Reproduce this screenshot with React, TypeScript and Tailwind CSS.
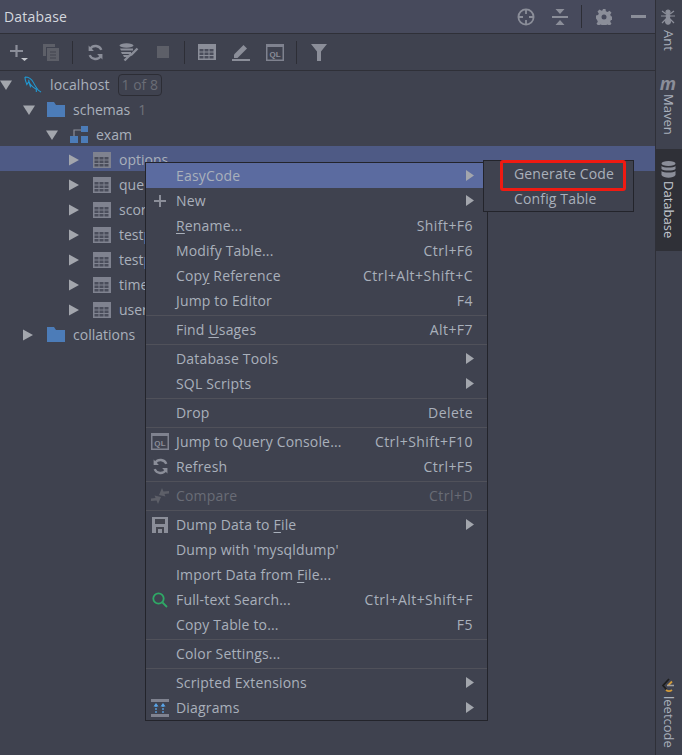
import React from "react";

const G = "#8b8e99";

function Tri({ open }: { open: boolean }) {
  return (
    <svg width="12" height="12" viewBox="0 0 12 12" className="shrink-0">
      {open ? <path d="M0 1.500h12L6 11z" fill="#a3a6ad" /> : <path d="M0 .5l10 5.500L0 11.500z" fill="#a3a6ad" />}
    </svg>
  );
}

function TableIcon({ c = "#7f828f", w = 18, h = 16 }: { c?: string; w?: number; h?: number }) {
  return (
    <svg width={w} height={h} viewBox="0 0 18 16" className="shrink-0">
      <rect width="18" height="16" fill={c} />
      {[5, 8.5, 12].map((y) => [1.5, 6.5, 11.5].map((x) => <rect key={`${x}-${y}`} x={x} y={y} width="4" height="2.5" fill="#4a4d5b" />))}
    </svg>
  );
}

function Folder() {
  return (
    <svg width="18" height="15" viewBox="0 0 18 15" className="shrink-0">
      <path d="M0 0h7l2 3h9v12H0z" fill="#4c7cb8" />
    </svg>
  );
}

function QL() {
  return (
    <svg width="18" height="17" viewBox="0 0 18 17" className="shrink-0">
      <rect x="0.75" y="0.75" width="16.5" height="15.5" fill="none" stroke="#7f828f" strokeWidth="1.5" />
      <rect x="0" y="0" width="18" height="3" fill="#7f828f" />
      <text x="9" y="13" textAnchor="middle" fontSize="8" fontWeight="700" fontFamily="'Liberation Sans',sans-serif" fill="#8b8e99">QL</text>
    </svg>
  );
}

function Refresh({ c = G }: { c?: string }) {
  return (
    <svg width="17" height="17" viewBox="0 0 16 16" className="shrink-0" fill="none" stroke={c} strokeWidth="2.2">
      <path d="M13.500 5.500A6 6 0 0 0 3 4.500M2.500 10.500A6 6 0 0 0 13 11.500" />
      <path d="M1.500 1.500l0 5 5 0z" fill={c} stroke="none" />
      <path d="M14.500 14.500l0-5-5 0z" fill={c} stroke="none" />
    </svg>
  );
}

function Sep() {
  return <div className="w-px h-[23px] bg-[#2d2e36] ml-[4px] mr-[5px] shrink-0" />;
}

function Slot({ children }: { children: React.ReactNode }) {
  return <div className="w-[34px] h-[22px] flex items-center justify-center shrink-0">{children}</div>;
}

function Toolbar() {
  return (
    <div className="h-[37px] flex items-center border-b border-[#2f3038]">
      <Slot>
        <svg width="18" height="18" viewBox="0 0 18 18" className="ml-[3px]">
          <path d="M6.500 2v12M0 8h13" stroke={G} strokeWidth="2.2" fill="none" />
          <path d="M11 15h7l-3.500 3z" fill="#c4c6cc" />
        </svg>
      </Slot>
      <Slot>
        <svg width="17" height="17" viewBox="0 0 17 17">
          <path d="M0 0h12v3H3v9H0z" fill="#5d5f68" />
          <rect x="4" y="4" width="12" height="13" fill="#5d5f68" />
          <path d="M7 8h6M7 11h6M7 14h6" stroke="#43454f" strokeWidth="1" />
        </svg>
      </Slot>
      <Sep />
      <Slot><Refresh /></Slot>
      <Slot>
        <svg width="20" height="19" viewBox="0 0 20 19">
          <ellipse cx="7.500" cy="2.500" rx="7" ry="2.200" fill={G} />
          <path d="M1 5.500h13v2H2zM2 9h10v2H3zM4 12h6v2H5z" fill={G} />
          <path d="M18.500 5.500l-6 6-2 1-5 5" stroke={G} strokeWidth="2.400" fill="none" />
        </svg>
      </Slot>
      <Slot>
        <div className="w-[12px] h-[12px] bg-[#5d5f68]" />
      </Slot>
      <Sep />
      <Slot><TableIcon c={G} /></Slot>
      <Slot>
        <svg width="18" height="18" viewBox="0 0 18 18">
          <path d="M2 11.500L11.500 2l3.500 3.500L5.500 15H2z" fill={G} />
          <rect x="0" y="16" width="18" height="2" fill={G} />
        </svg>
      </Slot>
      <Slot><QL /></Slot>
      <Sep />
      <Slot>
        <svg width="16" height="17" viewBox="0 0 16 17">
          <path d="M0 0h16L10 7.500V17H6V7.500z" fill={G} />
        </svg>
      </Slot>
    </div>
  );
}

function Row({ indent, open, icon, children, selected }: { indent: number; open: boolean; icon: React.ReactNode; children: React.ReactNode; selected?: boolean }) {
  return (
    <div className={`h-[25px] pt-[2px] flex items-center text-[#a9b0bb] ${selected ? "bg-[#4e5a85]" : ""}`}>
      <div className="shrink-0" style={{ marginLeft: indent }} />
      <Tri open={open} />
      <div className="w-[12px] shrink-0" />
      <div className="w-[18px] flex justify-center shrink-0">{icon}</div>
      <div className="w-[8px] shrink-0" />
      {children}
    </div>
  );
}

type Item = {
  label?: React.ReactNode;
  key?: string;
  sub?: boolean;
  sep?: boolean;
  icon?: React.ReactNode;
  active?: boolean;
  dim?: boolean;
};

const U = ({ children }: { children: React.ReactNode }) => <span className="underline underline-offset-2">{children}</span>;

const items: Item[] = [
  { label: "EasyCode", sub: true, active: true },
  { label: "New", sub: true, icon: <svg width="14" height="14" viewBox="0 0 14 14"><path d="M7 1v12M1 7h12" stroke={G} strokeWidth="2" /></svg> },
  { label: <><U>R</U>ename...</>, key: "Shift+F6" },
  { label: "Modify Table...", key: "Ctrl+F6" },
  { label: <>Cop<U>y</U> Reference</>, key: "Ctrl+Alt+Shift+C" },
  { label: "Jump to Editor", key: "F4" },
  { sep: true },
  { label: <>Find <U>U</U>sages</>, key: "Alt+F7" },
  { sep: true },
  { label: "Database Tools", sub: true },
  { label: "SQL Scripts", sub: true },
  { sep: true },
  { label: "Drop", key: "Delete" },
  { sep: true },
  { label: "Jump to Query Console...", key: "Ctrl+Shift+F10", icon: <QL /> },
  { label: "Refresh", key: "Ctrl+F5", icon: <Refresh /> },
  { sep: true },
  {
    label: "Compare",
    key: "Ctrl+D",
    dim: true,
    icon: (
      <svg width="18" height="16" viewBox="0 0 18 16" fill="#5d5f68">
        <path d="M8 7l3-7 1.500 3.500L18 3v2.500l-4.500.5 1 2.500z" />
        <path d="M10 9l-3 7-1.500-3.500L0 13v-2.500l4.500-.5-1-2.500z" />
      </svg>
    ),
  },
  { sep: true },
  { label: <>Dump Data to <U>F</U>ile</>, sub: true, icon: <svg width="16" height="16" viewBox="0 0 16 16"><path d="M0 0h16v16H0z" fill={G} /><rect x="3" y="2" width="10" height="5" fill="#43454f" /><rect x="4" y="10" width="8" height="6" fill="#43454f" /><rect x="6" y="12" width="4" height="4" fill={G} /></svg> },
  { label: "Dump with 'mysqldump'" },
  { label: <>Import Data from <U>F</U>ile...</> },
  { label: "Full-text Search...", key: "Ctrl+Alt+Shift+F", icon: <svg width="16" height="16" viewBox="0 0 16 16" fill="none" stroke="#2fa866" strokeWidth="1.800"><circle cx="6.500" cy="6.500" r="5.200" /><path d="M10.500 10.500l4.500 4.500" /></svg> },
  { label: "Copy Table to...", key: "F5" },
  { sep: true },
  { label: "Color Settings..." },
  { sep: true },
  { label: "Scripted Extensions", sub: true },
  { label: "Diagrams", sub: true, icon: <svg width="18" height="18" viewBox="0 0 18 18"><rect width="18" height="3" fill="#7f828f" /><rect y="15" width="18" height="3" fill="#7f828f" /><path d="M5 14V6M12 14V6" stroke="#5aa5e8" strokeWidth="1.300" strokeDasharray="2 1" /><path d="M2.500 7.500L5 4l2.500 3.500zM9.500 7.500L12 4l2.500 3.500z" fill="#5aa5e8" /></svg> },
];

function Menu() {
  return (
    <div className="absolute left-[145px] top-[162px] w-[343px] bg-[#3f424f] border border-[#23242b] text-[#a9b0bb] z-10 tracking-[0.17px]">
      {items.map((it, i) =>
        it.sep ? (
          <div key={i} className="h-[4px] flex items-center">
            <div className="w-full h-px bg-[#50515a]" />
          </div>
        ) : (
          <div key={i} className={`h-[25px] flex items-center ${it.active ? "bg-[#5b6ba0]" : ""} ${it.dim ? "text-[#696c76]" : ""}`}>
            <div className="w-[30px] pr-[2px] flex justify-center shrink-0">{it.icon}</div>
            <span className="flex-1 whitespace-nowrap">{it.label}</span>
            {it.key && <span className="pr-[14px] whitespace-nowrap tracking-[0.45px]">{it.key}</span>}
            {it.sub && (
              <svg width="8" height="11" viewBox="0 0 8 11" className="mr-[13px]">
                <path d="M0 0l8 5.500-8 5.500z" fill="#a3a6ad" />
              </svg>
            )}
          </div>
        )
      )}
    </div>
  );
}

function SubMenu() {
  return (
    <div className="absolute left-[483px] top-[160px] w-[151px] h-[52px] bg-[#3f424f] border border-[#23242b] text-[#a9b0bb] z-20 pl-[30px] tracking-[0.15px]">
      <div className="h-[25px] flex items-center whitespace-nowrap">Generate Code</div>
      <div className="h-[25px] flex items-center whitespace-nowrap">Config Table</div>
      <div className="absolute left-[16px] -top-[1px] w-[126px] h-[31px] border-[3px] border-[#f01a12] rounded-[3px]" />
    </div>
  );
}

function Vert({ children, className = "" }: { children: React.ReactNode; className?: string }) {
  return <span className={`[writing-mode:vertical-rl] ${className}`}>{children}</span>;
}

function Strip() {
  return (
    <div className="w-[27px] shrink-0 h-full bg-[#3f424f] border-l border-[#2f3038] flex flex-col items-center text-[#a9b0bb] text-[13px] pr-[2px]">
      <div className="h-[75px] flex flex-col items-center pt-[9px]">
        <svg width="14" height="16" viewBox="0 0 14 16" stroke={G} strokeWidth="1.200" fill={G}>
          <ellipse cx="7" cy="3" rx="2" ry="2" /><ellipse cx="7" cy="7" rx="1.800" ry="2" /><ellipse cx="7" cy="12" rx="2.400" ry="3.200" />
          <path d="M5 5L1 2M9 5l4-3M5 7H0M9 7h5M5 10l-4 4M9 10l4 4" fill="none" />
        </svg>
        <Vert className="mt-[5px]">Ant</Vert>
      </div>
      <div className="h-[74px] flex flex-col items-center pt-[1px]">
        <span className="font-bold italic text-[18px] leading-[15px] text-[#8b8e99]">m</span>
        <Vert className="mt-[3px]">Maven</Vert>
      </div>
      <div className="h-[102px] w-[27px] -mr-[2px] bg-[#2f3037] flex flex-col items-center pt-[12px] pr-[2px] text-[#c3c8d0]">
        <svg width="15" height="17" viewBox="0 0 15 17" fill={G}>
          <ellipse cx="7.500" cy="2.500" rx="7" ry="2.500" />
          <path d="M.5 5c2 2 12 2 14 0v3c-2 2-12 2-14 0zM.5 10c2 2 12 2 14 0v4c-2 3.500-12 3.500-14 0z" />
        </svg>
        <Vert className="mt-[3px]">Database</Vert>
      </div>
      <div className="flex-1" />
      <div className="flex flex-col items-center pb-[7px]">
        <svg width="14" height="15" viewBox="0 0 14 15" fill="none">
          <path d="M8 1L2 7.500l3.500 4" stroke="#1e1e1e" strokeWidth="1.800" />
          <path d="M5 12c2 1.500 4 1.500 6 0M11 3.500L7 7.500" stroke="#d09a3a" strokeWidth="1.800" />
          <path d="M6 7.500h7" stroke="#a0a0a0" strokeWidth="1.500" />
        </svg>
        <Vert className="mt-[3px]">leetcode</Vert>
      </div>
    </div>
  );
}

export default function App() {
  const tables = ["options", "que", "scor", "testp", "testp", "time", "user"];
  return (
    <div className="relative w-[682px] h-[755px] overflow-hidden flex bg-[#3f424f] text-[14px] font-['Open_Sans','Noto_Sans',sans-serif]">
      <div className="flex-1 min-w-0 flex flex-col">
        <div className="h-[34px] bg-[#474a5c] border-b border-[#2f3038] flex items-center pl-[4px] pr-[9px] text-[#d4d7de]">
          <span className="flex-1 tracking-[0.2px]">Database</span>
          <svg width="18" height="18" viewBox="0 0 18 18" fill="none" stroke={G} strokeWidth="1.800">
            <circle cx="9" cy="9" r="7.600" />
            <path d="M9 1v5M9 12v5M1 9h5M12 9h5" />
          </svg>
          <svg width="16" height="16" viewBox="0 0 16 16" className="ml-[17px]" fill={G}>
            <rect y="7" width="16" height="2" />
            <path d="M3.500 0h9L8 5zM3.500 16h9L8 11z" />
          </svg>
          <div className="w-px h-[23px] bg-[#2d2e36] ml-[13px] mr-[14px]" />
          <svg width="16" height="16" viewBox="0 0 16 16">
            <path d="M6.500 0h3l.4 2.300 1.700.7 1.900-1.300 2 2-1.300 1.900.7 1.700 2.100.4v3l-2.100.4-.7 1.700 1.300 1.900-2 2-1.900-1.300-1.700.7-.4 2.100h-3l-.4-2.100-1.700-.7-1.900 1.300-2-2 1.300-1.900-.7-1.700L0 9.500v-3l2.100-.4.700-1.700L1.500 2.500l2-2 1.900 1.300 1.700-.7z" fill={G} />
            <circle cx="8" cy="8" r="2.500" fill="#474a5c" />
          </svg>
          <div className="w-[15px] h-[3px] bg-[#8b8e99] ml-[19px]" />
        </div>
        <Toolbar />
        <div>
          <div className="h-[25px] pt-[2px] flex items-center text-[#a9b0bb]">
            <Tri open />
            <div className="w-[12px] shrink-0" />
            <svg width="18" height="18" viewBox="0 0 19 19" fill="none" stroke="#1f9bd6" strokeWidth="1.100" className="shrink-0">
              <path d="M1 1c4 0 7 2 9 6s3 5 5 8l3 2M1 1c0 3 1 5 2 8l2-3 2 6M5 4c0 3 2 6 5 8l3 2v3" />
            </svg>
            <span className="ml-[8px] tracking-[0.1px]">localhost</span>
            <span className="ml-[8px] h-[22px] px-[3px] flex items-center border border-[#2c2d35] rounded-[4px] text-[#6a6d76]">1 of 8</span>
          </div>
          <Row indent={23} open icon={<Folder />}>
            <span>schemas</span><span className="ml-[8px] text-[14px] text-[#6f727b]">1</span>
          </Row>
          <Row indent={46} open icon={
            <svg width="18" height="17" viewBox="0 0 18 17" className="shrink-0">
              <rect x="0" y="10" width="8" height="7" fill="#4c7cb8" />
              <rect x="11" y="0" width="7" height="6" fill="#4c7cb8" />
              <rect x="11" y="10" width="7" height="7" fill="#4c7cb8" />
              <path d="M4 10V4h7" fill="none" stroke="#8b8e99" strokeWidth="1.200" />
            </svg>
          }>
            <span>exam</span>
          </Row>
          {tables.map((t, i) => (
            <Row key={`${t}-${i}`} indent={69} open={false} selected={i === 0} icon={<TableIcon />}>
              <span className="whitespace-nowrap">{t}</span>
            </Row>
          ))}
          <Row indent={23} open={false} icon={<Folder />}>
            <span>collations</span>
          </Row>
        </div>
      </div>
      <Strip />
      <Menu />
      <SubMenu />
    </div>
  );
}
